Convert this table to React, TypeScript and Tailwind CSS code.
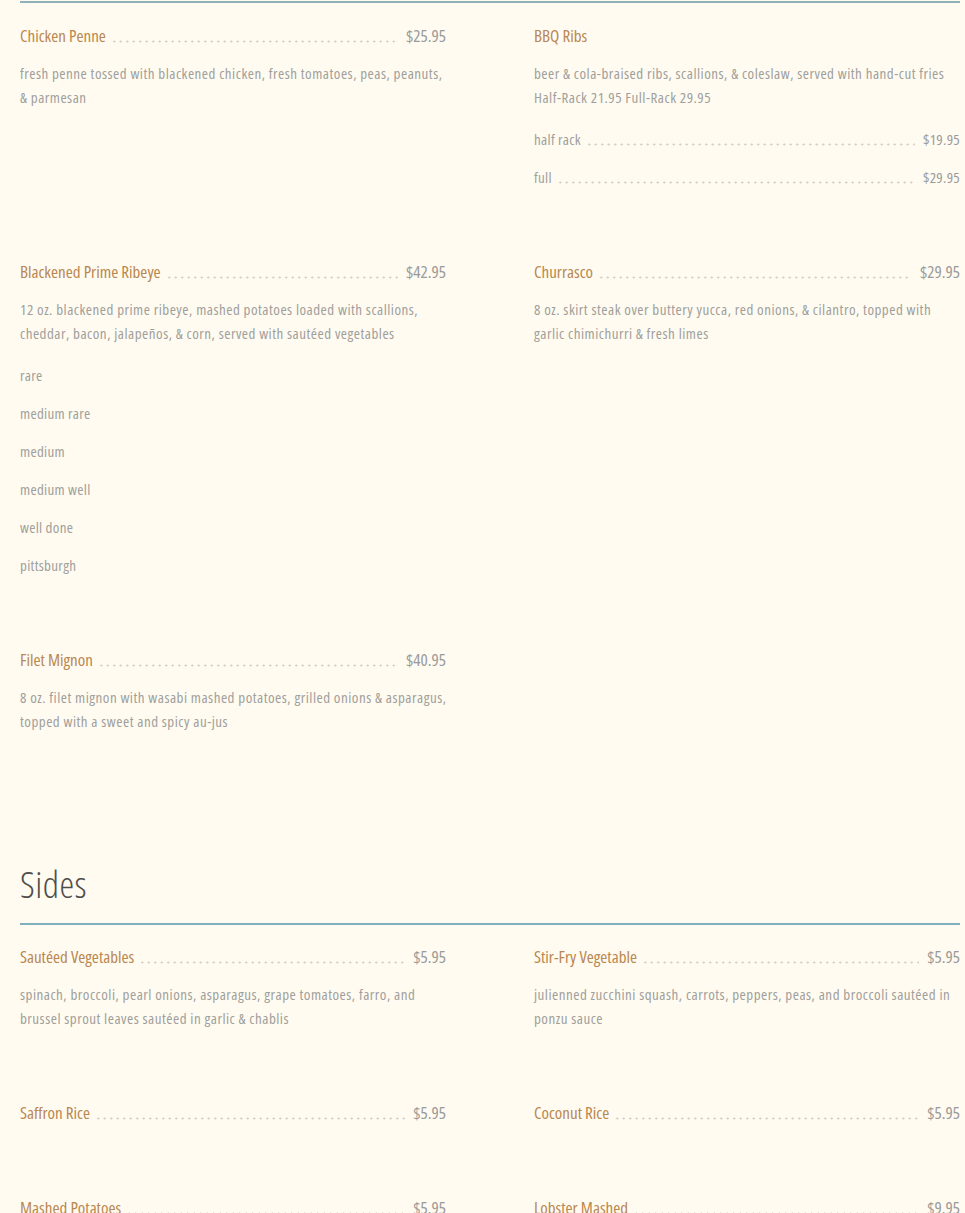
type Item = {
  name: string;
  price?: string;
  desc?: string[];
  options?: { label: string; price?: string }[];
};

const mains: Item[] = [
  {
    name: "Chicken Penne",
    price: "$25.95",
    desc: ["fresh penne tossed with blackened chicken, fresh tomatoes, peas, peanuts,", "& parmesan"],
  },
  {
    name: "BBQ Ribs",
    desc: ["beer & cola-braised ribs, scallions, & coleslaw, served with hand-cut fries", "Half-Rack 21.95 Full-Rack 29.95"],
    options: [
      { label: "half rack", price: "$19.95" },
      { label: "full", price: "$29.95" },
    ],
  },
  {
    name: "Blackened Prime Ribeye",
    price: "$42.95",
    desc: ["12 oz. blackened prime ribeye, mashed potatoes loaded with scallions,", "cheddar, bacon, jalapeños, & corn, served with sautéed vegetables"],
    options: [
      { label: "rare" },
      { label: "medium rare" },
      { label: "medium" },
      { label: "medium well" },
      { label: "well done" },
      { label: "pittsburgh" },
    ],
  },
  {
    name: "Churrasco",
    price: "$29.95",
    desc: ["8 oz. skirt steak over buttery yucca, red onions, & cilantro, topped with", "garlic chimichurri & fresh limes"],
  },
  {
    name: "Filet Mignon",
    price: "$40.95",
    desc: ["8 oz. filet mignon with wasabi mashed potatoes, grilled onions & asparagus,", "topped with a sweet and spicy au-jus"],
  },
];

const sides: Item[] = [
  {
    name: "Sautéed Vegetables",
    price: "$5.95",
    desc: ["spinach, broccoli, pearl onions, asparagus, grape tomatoes, farro, and", "brussel sprout leaves sautéed in garlic & chablis"],
  },
  {
    name: "Stir-Fry Vegetable",
    price: "$5.95",
    desc: ["julienned zucchini squash, carrots, peppers, peas, and broccoli sautéed in", "ponzu sauce"],
  },
  { name: "Saffron Rice", price: "$5.95" },
  { name: "Coconut Rice", price: "$5.95" },
  { name: "Mashed Potatoes", price: "$5.95" },
  { name: "Lobster Mashed", price: "$9.95" },
];

function Leader() {
  return (
    <span className="flex-1 ml-[5px] mr-[8px] mb-[5px] h-[3px] bg-[radial-gradient(circle,#d6d1c6_0.9px,transparent_1.3px)] bg-[length:6.5px_3px] bg-repeat-x" />
  );
}

function MenuItem({ item }: { item: Item }) {
  return (
    <div className="flex flex-col">
      <div className="flex items-end h-6 leading-6">
        <span className="text-[17px] font-medium text-[#b9874f]">{item.name}</span>
        {item.price ? (
          <>
            <Leader />
            <span className="text-[17px] text-[#9a9a98]">{item.price}</span>
          </>
        ) : null}
      </div>
      {item.desc ? (
        <div className="mt-[13px] text-[15px] leading-6 text-[#a09f9b] font-medium tracking-[0.5px]">
          {item.desc.map((l, i) => (
            <div key={i} className="whitespace-nowrap">{l}</div>
          ))}
        </div>
      ) : null}
      {item.options ? (
        <div className="mt-[18px] flex flex-col gap-[14px]">
          {item.options.map((o) => (
            <div key={o.label} className="flex items-end h-6 leading-6 text-[15px] text-[#a09f9b] font-medium tracking-[0.3px]">
              <span>{o.label}</span>
              {o.price ? (
                <>
                  <Leader />
                  <span className="text-[15px] text-[#9a9a98]">{o.price}</span>
                </>
              ) : null}
            </div>
          ))}
        </div>
      ) : null}
    </div>
  );
}

export default function App() {
  return (
    <div className="min-h-screen bg-[#fffbf1] pl-5 pr-[5px] pt-px font-['Open_Sans',sans-serif] font-stretch-condensed overflow-hidden">
      <div className="h-[2px] bg-[#8fb1ba]" />
      <div className="grid grid-cols-2 gap-x-[88px] gap-y-[71px] mt-[21px]">
        {mains.map((it) => (
          <MenuItem key={it.name} item={it} />
        ))}
      </div>
      <div className="mt-[131px] h-10 flex items-center">
        <h2 className="text-[37px] leading-10 font-light text-[#4f4d4a] tracking-[0.5px]">Sides</h2>
      </div>
      <div className="mt-[19px] h-[2px] bg-[#7fb0bb]" />
      <div className="grid grid-cols-2 gap-x-[88px] gap-y-[71px] mt-5">
        {sides.map((it) => (
          <MenuItem key={it.name} item={it} />
        ))}
      </div>
    </div>
  );
}
